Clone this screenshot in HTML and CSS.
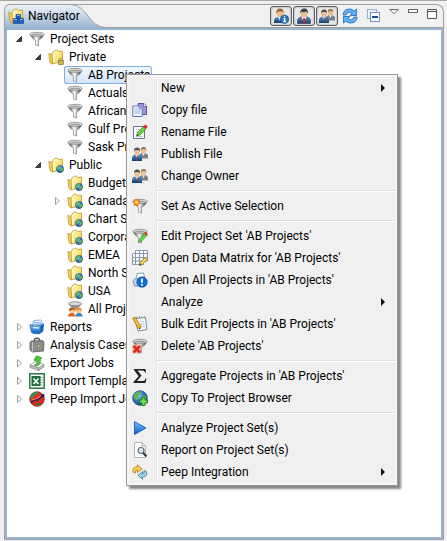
FILE: index.html
```html
<!DOCTYPE html>
<html lang="en">
<head>
<meta charset="utf-8">
<title>Navigator</title>
<link rel="stylesheet" href="styles.css">
</head>
<body>
<svg class="defs" width="0" height="0" aria-hidden="true">
  <defs>
    <linearGradient id="g-metal"><stop offset="0.1" stop-color="#555"/><stop offset=".45" stop-color="#fff"/><stop offset=".9" stop-color="#444"/></linearGradient>
    <linearGradient id="g-gold" x1="0" y1="0" x2="1" y2="1"><stop offset="0" stop-color="#fffcdc"/><stop offset=".5" stop-color="#fde780"/><stop offset="1" stop-color="#f0c03a"/></linearGradient>
    <linearGradient id="g-suit" x1="0" y1="0" x2="0" y2="1"><stop offset="0" stop-color="#5c96cc"/><stop offset="1" stop-color="#123c6c"/></linearGradient>
    <linearGradient id="g-blue" x1="0" y1="0" x2="0" y2="1"><stop offset="0" stop-color="#7cc0fa"/><stop offset="1" stop-color="#0a5cc8"/></linearGradient>
    <linearGradient id="g-tab" x1="0" y1="0" x2="0" y2="1"><stop offset="0" stop-color="#f0f4f9"/><stop offset="1" stop-color="#99b4d1"/></linearGradient>
    <radialGradient id="g-globe" cx=".35" cy=".3" r=".8"><stop offset="0" stop-color="#9cd0ff"/><stop offset=".5" stop-color="#2e74c4"/><stop offset="1" stop-color="#123c78"/></radialGradient>

    <symbol id="funnel" viewBox="0 0 16 16">
      <path d="M1 3.500Q2 6.500 6.500 9.500V14L9.500 15V9.500Q14 6.500 15 3.500Z" fill="url(#g-metal)" stroke="#777" stroke-width=".6"/>
      <ellipse cx="8" cy="3.300" rx="7" ry="2" fill="#f0f0f0" stroke="#808080" stroke-width=".8"/>
      <ellipse cx="8" cy="3.500" rx="5" ry="1" fill="#a0a0a0"/>
    </symbol>
    <symbol id="folder" viewBox="0 0 16 16">
      <path d="M.8 4.500L4.500 5.500V15L2 13.500Z" fill="#f6d050" stroke="#c0962c" stroke-width=".8"/>
      <path d="M5 3L6.500 1.500L9 1L10.500 2.500L14.500 2V12L4.500 15L4 5Z" fill="url(#g-gold)" stroke="#c0962c" stroke-width=".8"/>
      <path d="M5 5L6.300 4.700V13.500L5 14Z" fill="#fffbd0"/>
    </symbol>
    <symbol id="globe" viewBox="0 0 16 16">
      <circle cx="8" cy="8" r="7.300" fill="url(#g-globe)" stroke="#244f7c" stroke-width=".8"/>
      <path d="M2 5Q4 1.500 8 1.500L9 4L6 6L7 8L4.500 10L2 8ZM9 7L13 5L14.500 8Q14 12 10 14L8 11Z" fill="#5cb850"/>
    </symbol>
    <symbol id="folder-globe" viewBox="0 0 16 16">
      <use href="#folder"/><use href="#globe" x="8" y="8" width="8" height="8"/>
    </symbol>
    <symbol id="folder-lock" viewBox="0 0 16 16">
      <use href="#folder"/>
      <path d="M11.500 11.500V10Q13 8 14.500 10V11.500" fill="none" stroke="#9a8a60"/>
      <rect x="10.500" y="11.500" width="5" height="4" fill="#d0b45c" stroke="#907434" stroke-width=".7"/>
    </symbol>
    <symbol id="folder-cubes" viewBox="0 0 16 16">
      <use href="#folder"/>
      <path d="M8 6.500H12.500V11H8ZM5.500 10.500H10V15.500H5.500ZM10.700 10.500H15.500V15.500H10.700Z" fill="#1c64c8" stroke="#0b3d8c" stroke-width=".6"/>
      <path d="M9 7.500H11.500M6.500 11.500H9M11.700 11.500H14.500" stroke="#8cc4ff"/>
    </symbol>
    <symbol id="person" viewBox="0 0 16 16">
      <path d="M1.500 15.500V12Q2 9.500 5 9H11Q14 9.500 14.500 12V15.500Z" fill="url(#g-suit)" stroke="#12304e" stroke-width=".5"/>
      <path d="M5.500 9L8 14L10.500 9Z" fill="#fff"/><path d="M7.300 10H8.900L9.500 14.500L8.200 15.500L7 14Z" fill="#d02818"/>
      <ellipse cx="8" cy="5.300" rx="3.200" ry="4.200" fill="#f0bc84"/>
      <path d="M4.300 6Q3.500 .5 8.500 .5Q12.500 .5 11.700 6L10.800 3.500Q7 4.500 5.300 3.500Z" fill="#34424c"/>
    </symbol>
    <symbol id="person-info" viewBox="0 0 16 16">
      <path d="M1 15V12Q1.500 9.500 4.500 9H9.500Q13 9.500 13 15Z" fill="url(#g-suit)"/>
      <path d="M5 9L7 13L9 9Z" fill="#fff"/><ellipse cx="7" cy="5" rx="3" ry="4" fill="#f0bc84"/>
      <path d="M3.500 6Q2.500 .5 7.500 .5Q11 .5 10.500 6L9.500 3.500H5Z" fill="#9a6430"/>
      <circle cx="11.500" cy="11.300" r="4.300" fill="#2873b6" stroke="#10508a" stroke-width=".6"/>
      <path d="M11.500 8.200V9.500M10.500 10.700H11.700V13.500M10.300 13.500H13" fill="none" stroke="#fff" stroke-width="1.300"/>
    </symbol>
    <symbol id="people" viewBox="0 0 16 16">
      <path d="M7 12.500V9.500Q7.500 7.500 10 7H13Q15.500 7.500 16 9.500V12.500Z" fill="#7c8084"/>
      <path d="M10 7L11.500 10L13 7Z" fill="#f4f4f4"/><ellipse cx="11.500" cy="4.500" rx="2.400" ry="3" fill="#eebb88"/>
      <path d="M8.800 5Q8.300 1 11.800 1Q14.600 1 14.200 5L13.300 3H10Z" fill="#907450"/>
      <path d="M0 15V11.500Q.5 9 3 8.500H7Q9.500 9 10 11.500V15Z" fill="url(#g-suit)"/>
      <path d="M3.500 8.500L5 12L6.500 8.500Z" fill="#fff"/><path d="M4.600 9.500H5.600L6 12.500L5 13.500Z" fill="#cc2c20"/>
      <ellipse cx="5" cy="5.500" rx="2.500" ry="3.300" fill="#eebb88"/>
      <path d="M2 6Q1.500 1.500 5.300 1.500Q8.500 1.500 7.900 6L7 4H3Z" fill="#44525e"/>
    </symbol>
    <symbol id="funnel-people" viewBox="0 0 16 16">
      <ellipse cx="8" cy="2.800" rx="6.500" ry="2" fill="#ddd" stroke="#777" stroke-width=".8"/>
      <path d="M1.500 3Q3 6 7 8H9Q13 6 14.500 3Q8 6 1.500 3Z" fill="#909090"/>
      <circle cx="5" cy="9.500" r="3" fill="#f8c890"/><circle cx="11.500" cy="9.500" r="3" fill="#f8c890"/>
      <path d="M2 10Q1.500 6.500 5 6.500Q8 6.500 8 10L6 8.500Z" fill="#a85818"/><path d="M8.500 10Q8 6.500 11.500 6.500Q15 6.500 14.500 10L12 8.500Z" fill="#e09020"/>
      <path d="M1 15.500Q1 12 5 12Q8 12 8.500 15.500Z" fill="#e0641c"/><path d="M8.500 15.500Q8.500 12 12 12Q15.500 12 15.500 15.500Z" fill="#3480cc"/>
    </symbol>
    <symbol id="reports" viewBox="0 0 16 16">
      <path d="M3 6L5 1.500L12 1L14 5Z" fill="#fff" stroke="#5ba0dc" stroke-width=".8"/><path d="M5 3.500H12M4 5H13" stroke="#88baf0"/>
      <path d="M.8 5.500Q5 8 12 6L11 14.500Q6 15.500 2.500 13.500Z" fill="url(#g-blue)" stroke="#1662ac" stroke-width=".7"/>
      <path d="M12 6L15 4.500L14.200 12.500L11 14.500Z" fill="#1562b8"/><path d="M4 8.500L10 9" stroke="#d9eeff" stroke-width="1.500"/>
    </symbol>
    <symbol id="briefcase" viewBox="0 0 16 16">
      <path d="M5.500 4V2Q8 .5 10.500 2V4" fill="none" stroke="#555" stroke-width="1.300"/>
      <path d="M2 4L13 3.500Q15 4 15 6L14.500 14L3.500 15L1 13V6Z" fill="#888" stroke="#606060" stroke-width=".8"/>
      <path d="M4.500 5H14V12.500L4.500 13.500Z" fill="#8e8e8e"/><path d="M3.500 5V14.500" stroke="#c4c4c4"/>
      <rect x="8.500" y="7.500" width="2" height="3" fill="#e4d078" stroke="#666" stroke-width=".5"/>
    </symbol>
    <symbol id="export" viewBox="0 0 16 16">
      <path d="M1 10L6 6.500L15 9.500L9.500 13Z" fill="#f4f4f4" stroke="#999" stroke-width=".7"/>
      <path d="M1 10L9.500 13V15.500L1 12.500ZM9.500 13L15 9.500V12L9.500 15.500Z" fill="#c4c4c4" stroke="#888" stroke-width=".7"/>
      <path d="M5.500 10Q9 9.500 7.500 5L5 5.500L7.500 .8L13 3L11 4Q12.500 9 8 11Z" fill="#54c83c" stroke="#268020" stroke-width=".7"/>
    </symbol>
    <symbol id="excel" viewBox="0 0 16 16">
      <rect x=".8" y=".8" width="14.400" height="14.400" fill="#fff" stroke="#267a40" stroke-width="1.500"/>
      <path d="M10 4.500H14M10 7H14M10 9.500H14M10 12H14" stroke="#8dbc98"/>
      <rect x="2.500" y="3" width="9" height="10" fill="#1c7038"/><path d="M4.500 5.500L9.500 11M9.500 5.500L4.500 11" stroke="#fff" stroke-width="1.700"/>
    </symbol>
    <symbol id="peep" viewBox="0 0 16 16">
      <circle cx="8" cy="8" r="7.300" fill="#e02c20" stroke="#7c2020" stroke-width=".7"/>
      <path d="M1 6Q3 .5 9 1L9 3L5 4.500L4 7L1.500 8Z" fill="#34945c"/><path d="M6 14L9 12L13 12Q10 16 6 14Z" fill="#34703c"/>
      <path d="M2 11.500L6.500 8.500L8.500 9.500L13 5.500" stroke="#171d58" stroke-width="1.200" fill="none"/><path d="M11 4L15.500 3L15 7Z" fill="#171d58"/><path d="M3 9Q8 8 12 4.500" stroke="#ff8a70" fill="none"/>
    </symbol>
    <symbol id="copy" viewBox="0 0 16 16">
      <path d="M6 1.500H12L14.500 4V12.500H6Z" fill="#9c94dc" stroke="#5a51a0"/><path d="M11.500 1.500V4.500H14.500" fill="#fff" stroke="#5a51a0" stroke-width=".7"/>
      <path d="M.8 4H7L10.200 7V14.500H.8Z" fill="#edf4ff" stroke="#6279ae"/><path d="M7 4V7H10" fill="#b9c8ec" stroke="#6279ae" stroke-width=".7"/>
      <path d="M2.500 7H5.500M2.500 9H8.500M2.500 11H8.500" stroke="#9cb0d4"/>
    </symbol>
    <symbol id="rename" viewBox="0 0 16 16">
      <path d="M1.500 2.500H12.500V14.500H1.500Z" fill="#fafcff" stroke="#687888"/><path d="M3.500 5.500H8M3.500 8H7M3.500 12.500H10.500" stroke="#b5c4d4"/>
      <path d="M4.500 12L6 8L11.500 2.500L14 5L8 11Z" fill="#68d840" stroke="#2b8420" stroke-width=".7"/>
      <path d="M11 3L13 .8Q15.500 1 15.300 3.500L13.500 5.300Z" fill="#e02c20"/><path d="M4.500 12L5.200 10L6.500 11.200Z" fill="#333"/>
    </symbol>
    <symbol id="funnel-new" viewBox="0 0 16 16">
      <use href="#funnel"/><path d="M4.500 0L5.500 2.500L8 1.500L7 4L9 5.500L6.500 6L6 9L4.300 6.800L1.500 8L2.300 5.300L0 4L2.500 3L2 .8L4 2Z" fill="#f46a14"/><circle cx="4.500" cy="4.300" r="1.900" fill="#ffdf38"/>
    </symbol>
    <symbol id="funnel-edit" viewBox="0 0 16 16">
      <use href="#funnel"/><path d="M6.500 14.500L7.500 11L12.500 5L15 7.500L9.500 13.300Z" fill="#5fd845" stroke="#2f9620" stroke-width=".6"/><path d="M12 5.500L13.500 4Q15.500 4 15.500 6.500L14.500 8Z" fill="#d93020"/>
    </symbol>
    <symbol id="matrix" viewBox="0 0 16 16">
      <path d="M2.500 .5H15.500V11.500H13.500V14.500H.5V3.500H2.500Z" fill="#f8faff"/>
      <path d="M.5 3.500H15.500M.5 7.500H15.500M.5 11H15.500M.5 14.500H12M3.500 .5V14.500M7.500 .5V14.500M11.500 .5V14.500M3.500 .5H15.500V11M.5 3.500V14.500" stroke="#8a98b0" fill="none"/>
      <path d="M7.500 15.500L8.500 12.500L13 7.500L15 9.500L10.500 14.500Z" fill="#fbd850" stroke="#94701c" stroke-width=".8"/><path d="M7.500 15.500L8 13.700L9.300 15Z" fill="#222"/>
    </symbol>
    <symbol id="open-all" viewBox="0 0 16 16">
      <path d="M4 7L5 1.500L11.500 1L13 7Z" fill="#fff" stroke="#8ba0bd"/><path d="M.8 9L4 6.500H13L15 9L13.500 14H2.500Z" fill="#c2d6ec" stroke="#6880a0" stroke-width=".8"/>
      <circle cx="10" cy="10" r="5.200" fill="#0d70dc" stroke="#0b4a9c" stroke-width=".7"/><path d="M10 6.500V10.800M10 12V13.700" stroke="#fff" stroke-width="1.800"/>
    </symbol>
    <symbol id="notes" viewBox="0 0 16 16">
      <path d="M3 2.500L13.500 1.500L15 13.500L6 15Z" fill="#f5f9fc" stroke="#7890a0"/><path d="M5 2V.5M7.500 2V.5M10 2V.5M12.500 2V.5" stroke="#6c8090"/>
      <path d="M8 6L12 5.500M8 8.500L13 8M8.500 11L13 10.500" stroke="#b7c8d4"/>
      <path d="M.8 2L3 1L8.500 10L8 13L5.500 11.500Z" fill="#f9bd34" stroke="#946010" stroke-width=".7"/><path d="M7 12.300L8 13.300L8.300 11Z" fill="#222"/>
    </symbol>
    <symbol id="funnel-delete" viewBox="0 0 16 16">
      <use href="#funnel"/><rect x=".3" y="6.500" width="9" height="9" fill="#f0a898" opacity=".7"/><path d="M1.500 8L8 14.500M8 8L1.500 14.500" stroke="#d92a16" stroke-width="2.500"/>
    </symbol>
    <symbol id="sigma" viewBox="0 0 16 16">
      <path d="M2 1H13.500L14 4.500H13Q12.500 2.500 10.500 2.500H5.500L9.500 7.500L5 13H11Q13 13 13.500 10.500H14.500L13.500 15H1.500V14L6.700 8.200L2 2Z" fill="#222"/>
    </symbol>
    <symbol id="globe-add" viewBox="0 0 16 16">
      <use href="#globe"/><path d="M10 7.500H13V10H15.500V13H13V15.500H10V13H7.500V10H10Z" fill="#75df50" stroke="#16701c" stroke-width=".9"/>
    </symbol>
    <symbol id="play" viewBox="0 0 16 16"><path d="M2.500 1.500L14 8L2.500 14.500Z" fill="url(#g-blue)" stroke="#1461c4" stroke-width=".9"/></symbol>
    <symbol id="report-find" viewBox="0 0 16 16">
      <path d="M2.500 .5H10L13.500 4V15.500H2.500Z" fill="#fff" stroke="#b0b0b0"/><path d="M10 .5V4H13.500" fill="#ddd" stroke="#b0b0b0"/>
      <circle cx="9" cy="8.500" r="3" fill="#d4e8f6" stroke="#666" stroke-width="1.200"/><path d="M11.200 10.800L14.500 14.500" stroke="#333" stroke-width="2"/>
    </symbol>
    <symbol id="integrate" viewBox="0 0 16 16">
      <path d="M1 8Q0 2.500 5.500 3V.8L10 5L5.500 8.500V6Q3 5.500 3.500 9Z" fill="#fccb58" stroke="#b67b14" stroke-width=".8"/>
      <path d="M14.500 7.500Q16 13 10.500 13V15.300L6 11.300L10.500 7.500V10Q12.500 10 12 6.500Z" fill="#9bcde3" stroke="#3c7f9c" stroke-width=".8"/>
    </symbol>
    <symbol id="refresh" viewBox="0 0 16 16">
      <path d="M1 7Q1.500 1 7.500 1Q10.500 1 12 3L14.500 1V7.500H8L10 5.300Q8.500 4 6.500 4.500Q4.500 5 4 7Z" fill="#5cb0f6" stroke="#1d64ba" stroke-width=".8"/>
      <path d="M15 9Q14.500 15 8.500 15Q5.500 15 4 13L1.500 15V8.500H8L6 10.700Q7.500 12 9.500 11.500Q11.500 11 12 9Z" fill="#5cb0f6" stroke="#1d64ba" stroke-width=".8"/>
    </symbol>
    <symbol id="collapse" viewBox="0 0 16 16">
      <rect x="1.500" y="1.500" width="9" height="9" fill="#e6eef8" stroke="#9aafca"/><rect x="4.500" y="4.500" width="9" height="9" fill="#f6faff" stroke="#7892b8"/><path d="M6 9H12" stroke="#174c94" stroke-width="2"/>
    </symbol>
    <symbol id="open" viewBox="0 0 8 8"><path d="M6.500 1.500V6.500H1.500Z" fill="#404040" stroke="#222" stroke-width=".8"/></symbol>
    <symbol id="closed" viewBox="0 0 8 8"><path d="M2.500 .5L6.500 4L2.500 7.500Z" fill="#fff" stroke="#a0a0a0"/></symbol>
  </defs>
</svg>

<main class="view">
  <header class="bar">
    <h1 class="tab">
      <svg class="tab-shape" viewBox="0 0 108 24" aria-hidden="true"><path d="M0 24V6Q1 1 6 .5H66C84 .5 84 23.500 102 23.500L102 24Z" fill="url(#g-tab)"/><path d="M.5 24V6Q1 1 6 .5H66C84 .5 84 23.500 102 23.500H108" fill="none" stroke="#a0a0a0"/></svg>
      <svg class="icon"><use href="#folder-cubes"/></svg>
      <span>Navigator</span>
    </h1>
    <div class="tools">
      <button class="toggle" aria-label="User details" aria-pressed="true"><svg class="icon"><use href="#person-info"/></svg></button>
      <button class="toggle" aria-label="Private" aria-pressed="true"><svg class="icon"><use href="#person"/></svg></button>
      <button class="toggle" aria-label="Public" aria-pressed="true"><svg class="icon"><use href="#people"/></svg></button>
      <button class="tool" aria-label="Refresh"><svg class="icon"><use href="#refresh"/></svg></button>
      <button class="tool" aria-label="Collapse all"><svg class="icon"><use href="#collapse"/></svg></button>
    </div>
    <div class="window-tools">
      <button aria-label="View menu"><svg width="10" height="10"><path d="M.8 .5H9.200L5 4.800Z" fill="#fff" stroke="#666"/></svg></button>
      <button aria-label="Minimize"><svg width="10" height="10"><rect x=".5" y=".5" width="9" height="3" fill="#fff" stroke="#666"/></svg></button>
      <button aria-label="Maximize"><svg width="10" height="10"><path d="M.5 .5H9.500V9.500H.5ZM.5 2.500H9.500" fill="#fff" stroke="#555"/></svg></button>
    </div>
  </header>

  <div class="body">
    <ul class="tree" role="tree" aria-label="Navigator">
      <li role="treeitem" aria-expanded="true">
        <div class="row"><button class="twisty" aria-label="Collapse"><svg><use href="#open"/></svg></button><svg class="icon"><use href="#funnel"/></svg><span class="label">Project Sets</span></div>
        <ul role="group">
          <li role="treeitem" aria-expanded="true">
            <div class="row"><button class="twisty" aria-label="Collapse"><svg><use href="#open"/></svg></button><svg class="icon"><use href="#folder-lock"/></svg><span class="label">Private</span></div>
            <ul role="group">
              <li role="treeitem" aria-selected="true"><div class="row leaf selected"><svg class="icon"><use href="#funnel"/></svg><span class="label">AB Projects</span></div></li>
              <li role="treeitem"><div class="row leaf"><svg class="icon"><use href="#funnel"/></svg><span class="label">Actuals</span></div></li>
              <li role="treeitem"><div class="row leaf"><svg class="icon"><use href="#funnel"/></svg><span class="label">African</span></div></li>
              <li role="treeitem"><div class="row leaf"><svg class="icon"><use href="#funnel"/></svg><span class="label">Gulf Projects</span></div></li>
              <li role="treeitem"><div class="row leaf"><svg class="icon"><use href="#funnel"/></svg><span class="label">Sask Projects</span></div></li>
            </ul>
          </li>
          <li role="treeitem" aria-expanded="true">
            <div class="row"><button class="twisty" aria-label="Collapse"><svg><use href="#open"/></svg></button><svg class="icon"><use href="#folder-globe"/></svg><span class="label">Public</span></div>
            <ul role="group">
              <li role="treeitem"><div class="row leaf"><svg class="icon"><use href="#folder-globe"/></svg><span class="label">Budget</span></div></li>
              <li role="treeitem" aria-expanded="false"><div class="row"><button class="twisty" aria-label="Expand"><svg><use href="#closed"/></svg></button><svg class="icon"><use href="#folder-globe"/></svg><span class="label">Canada</span></div></li>
              <li role="treeitem"><div class="row leaf"><svg class="icon"><use href="#folder-globe"/></svg><span class="label">Chart Sets</span></div></li>
              <li role="treeitem"><div class="row leaf"><svg class="icon"><use href="#folder-globe"/></svg><span class="label">Corporate</span></div></li>
              <li role="treeitem"><div class="row leaf"><svg class="icon"><use href="#folder-globe"/></svg><span class="label">EMEA</span></div></li>
              <li role="treeitem"><div class="row leaf"><svg class="icon"><use href="#folder-globe"/></svg><span class="label">North Sea</span></div></li>
              <li role="treeitem"><div class="row leaf"><svg class="icon"><use href="#folder-globe"/></svg><span class="label">USA</span></div></li>
              <li role="treeitem"><div class="row leaf"><svg class="icon"><use href="#funnel-people"/></svg><span class="label">All Projects</span></div></li>
            </ul>
          </li>
        </ul>
      </li>
      <li role="treeitem" aria-expanded="false"><div class="row"><button class="twisty" aria-label="Expand"><svg><use href="#closed"/></svg></button><svg class="icon"><use href="#reports"/></svg><span class="label">Reports</span></div></li>
      <li role="treeitem" aria-expanded="false"><div class="row"><button class="twisty" aria-label="Expand"><svg><use href="#closed"/></svg></button><svg class="icon"><use href="#briefcase"/></svg><span class="label">Analysis Cases</span></div></li>
      <li role="treeitem" aria-expanded="false"><div class="row"><button class="twisty" aria-label="Expand"><svg><use href="#closed"/></svg></button><svg class="icon"><use href="#export"/></svg><span class="label">Export Jobs</span></div></li>
      <li role="treeitem" aria-expanded="false"><div class="row"><button class="twisty" aria-label="Expand"><svg><use href="#closed"/></svg></button><svg class="icon"><use href="#excel"/></svg><span class="label">Import Templates</span></div></li>
      <li role="treeitem" aria-expanded="false"><div class="row"><button class="twisty" aria-label="Expand"><svg><use href="#closed"/></svg></button><svg class="icon"><use href="#peep"/></svg><span class="label">Peep Import Jobs</span></div></li>
    </ul>
  </div>
</main>

<div class="menu" role="menu">
  <button class="item sub" role="menuitem" aria-haspopup="true"><svg class="icon"></svg><span>New</span></button>
  <button class="item" role="menuitem"><svg class="icon"><use href="#copy"/></svg><span>Copy file</span></button>
  <button class="item" role="menuitem"><svg class="icon"><use href="#rename"/></svg><span>Rename File</span></button>
  <button class="item" role="menuitem"><svg class="icon"><use href="#people"/></svg><span>Publish File</span></button>
  <button class="item" role="menuitem"><svg class="icon"><use href="#people"/></svg><span>Change Owner</span></button>
  <hr>
  <button class="item" role="menuitem"><svg class="icon"><use href="#funnel-new"/></svg><span>Set As Active Selection</span></button>
  <hr>
  <button class="item" role="menuitem"><svg class="icon"><use href="#funnel-edit"/></svg><span>Edit Project Set 'AB Projects'</span></button>
  <button class="item" role="menuitem"><svg class="icon"><use href="#matrix"/></svg><span>Open Data Matrix for 'AB Projects'</span></button>
  <button class="item" role="menuitem"><svg class="icon"><use href="#open-all"/></svg><span>Open All Projects in 'AB Projects'</span></button>
  <button class="item sub" role="menuitem" aria-haspopup="true"><svg class="icon"></svg><span>Analyze</span></button>
  <button class="item" role="menuitem"><svg class="icon"><use href="#notes"/></svg><span>Bulk Edit Projects in 'AB Projects'</span></button>
  <button class="item" role="menuitem"><svg class="icon"><use href="#funnel-delete"/></svg><span>Delete 'AB Projects'</span></button>
  <hr>
  <button class="item" role="menuitem"><svg class="icon"><use href="#sigma"/></svg><span>Aggregate Projects in 'AB Projects'</span></button>
  <button class="item" role="menuitem"><svg class="icon"><use href="#globe-add"/></svg><span>Copy To Project Browser</span></button>
  <hr>
  <button class="item" role="menuitem"><svg class="icon"><use href="#play"/></svg><span>Analyze Project Set(s)</span></button>
  <button class="item" role="menuitem"><svg class="icon"><use href="#report-find"/></svg><span>Report on Project Set(s)</span></button>
  <button class="item sub" role="menuitem" aria-haspopup="true"><svg class="icon"><use href="#integrate"/></svg><span>Peep Integration</span></button>
</div>
</body>
</html>
```
FILE: styles.css
```css
* {
  box-sizing: border-box;
}

body {
  margin: 0;
  min-height: 100vh;
  display: flex;
  padding: 3px 3px 2px 4px;
  background: #f0f0f0;
  border-top: 1px solid #a8a8a8;
  font: 12px/18px Roboto, "Open Sans", sans-serif;
  color: #000;
}

button {
  margin: 0;
  padding: 0;
  border: 0;
  background: none;
  font: inherit;
  color: inherit;
}

svg {
  display: block;
  flex: none;
}

ul {
  margin: 0;
  padding: 0;
  list-style: none;
}

.defs {
  position: absolute;
}

.icon {
  width: 16px;
  height: 16px;
}

.view {
  flex: 1;
  display: flex;
  flex-direction: column;
}

.bar {
  display: flex;
  height: 24px;
  border: 1px solid #a0a0a0;
  border-left: 0;
  border-radius: 6px 8px 0 0;
}

.tab {
  position: relative;
  display: flex;
  align-items: center;
  gap: 4px;
  margin: -1px auto -1px 0;
  padding-left: 4px;
  width: 108px;
  font-size: 12px;
  font-weight: 400;
}

.tab-shape {
  position: absolute;
  inset: 0;
  width: 108px;
  height: 24px;
}

.tab .icon,
.tab span {
  position: relative;
}

.tools {
  display: flex;
  align-items: center;
  gap: 1px;
}

.toggle {
  display: grid;
  place-items: center;
  width: 22px;
  height: 20px;
  border: 1px solid #606060;
  border-radius: 3px;
  background: #e8e8e8;
  box-shadow: inset 0 0 2px #888;
}

.tool {
  padding: 0 4px 0 3px;
}

.window-tools {
  display: flex;
  align-items: flex-start;
  gap: 9px;
  padding: 4px 6px 0 3px;
}

.body {
  flex: 1;
  border: 2px solid #99b4d1;
  outline: 1px solid #a0a0a0;
  margin: 0 1px;
  background: #fff;
}

.tree {
  padding-left: 8px;
}

.tree ul {
  padding-left: 19px;
}

.row {
  display: flex;
  align-items: center;
  width: max-content;
  height: 18px;
}

.row .icon {
  margin-right: 3px;
}

.leaf {
  margin-left: 11px;
  padding-left: 3px;
}

.twisty {
  width: 14px;
}

.twisty svg {
  width: 8px;
  height: 8px;
}

.label {
  padding: 0 2px;
}

.selected {
  border-radius: 3px;
  background: linear-gradient(#f2f8fe, #cfe4fb);
  box-shadow: inset 0 0 0 1px #84acdd;
}

.menu {
  position: absolute;
  left: 126px;
  top: 74px;
  width: 272px;
  padding: 2px;
  border: 1px solid #979797;
  background: linear-gradient(90deg, #e2e3e3 1px, #fff 1px 2px, transparent 2px) 29px 2px / 100% 408px no-repeat, #f0f0f0;
  box-shadow: inset 0 0 0 2px #f5f5f5, 3px 3px 2px #888;
}

.item {
  display: flex;
  align-items: center;
  gap: 13px;
  width: 100%;
  height: 22px;
  padding: 0 10px 0 3px;
  text-align: left;
}

.sub::after {
  content: "";
  margin-left: auto;
  border: 4px solid transparent;
  border-left-color: #111;
  border-right: 0;
}

.menu hr {
  height: 2px;
  margin: 3px 0 3px 28px;
  border: 0;
  border-top: 1px solid #e0e0e0;
  background: #fff;
}
```
